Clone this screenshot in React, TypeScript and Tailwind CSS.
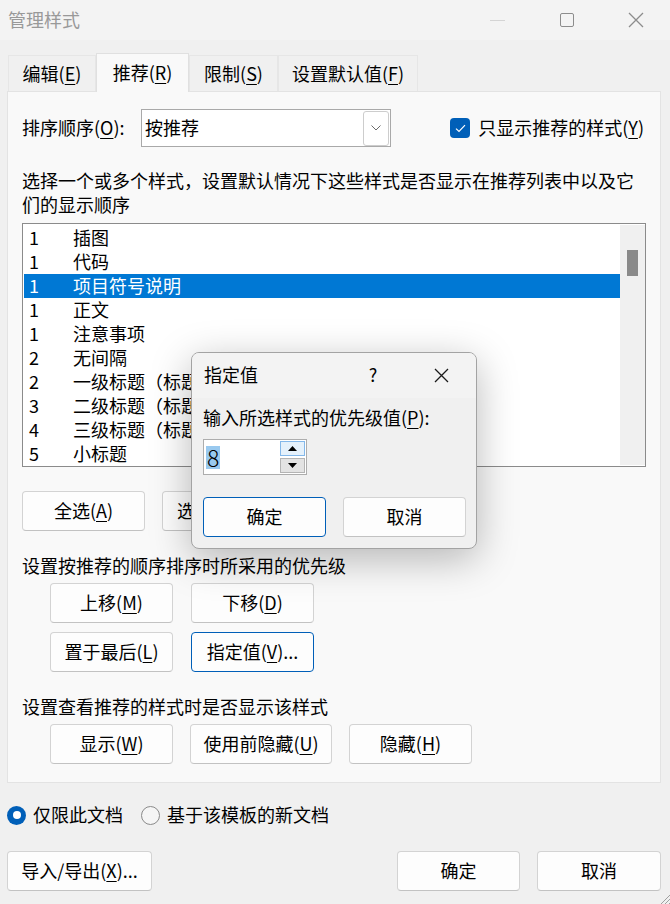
import React from 'react';
import clsx from 'clsx';

const Key = ({ k }: { k: string }) => (
  <span className="underline underline-offset-[3px] decoration-[1px]">{k}</span>
);

const Btn = ({
  children,
  className,
  primary,
}: {
  children: React.ReactNode;
  className?: string;
  primary?: boolean;
}) => (
  <div
    className={clsx(
      'h-[40px] flex items-center justify-center rounded-[4px] border bg-[#fdfdfd] shrink-0 pb-[2px] whitespace-nowrap',
      primary ? 'border-[#005fb8]' : 'border-[#d3d3d3] border-b-[#c2c2c2]',
      className
    )}
  >
    {children}
  </div>
);

// names cut where the modal covers them
const styles: { n: number; name: string }[] = [
  { n: 1, name: '插图' },
  { n: 1, name: '代码' },
  { n: 1, name: '项目符号说明' },
  { n: 1, name: '正文' },
  { n: 1, name: '注意事项' },
  { n: 2, name: '无间隔' },
  { n: 2, name: '一级标题（标题' },
  { n: 3, name: '二级标题（标题' },
  { n: 4, name: '三级标题（标题' },
  { n: 5, name: '小标题' },
];

const tabs = [
  { label: '编辑', k: 'E', w: 'w-[88px]' },
  { label: '推荐', k: 'R', w: 'w-[93px]', active: true },
  { label: '限制', k: 'S', w: 'w-[89px]' },
  { label: '设置默认值', k: 'F', w: 'w-[140px]' },
];

export default function App() {
  return (
    <div className="w-[670px] h-[904px] bg-[#f0f0f0] relative overflow-hidden text-[#000] text-[18px] leading-[24px] font-['Noto_Sans_CJK_SC','Noto_Sans',sans-serif]">
      {/* title bar */}
      <div className="h-[40px] bg-[#f3f3f3] flex items-center">
        <div className="pl-[8px] pb-[3px] flex-1 text-[#999999]">管理样式</div>
        <div className="w-[70px] h-full flex items-center justify-center">
          <div className="w-[15px] h-px bg-[#d4d4d4]" />
        </div>
        <div className="w-[70px] h-full flex items-center justify-center">
          <div className="w-[14px] h-[14px] border-[1.5px] border-[#8c8c8c] rounded-[2px]" />
        </div>
        <div className="w-[68px] h-full flex items-center justify-center">
          <svg width="16" height="16" viewBox="0 0 16 16">
            <path d="M1 1L15 15M15 1L1 15" stroke="#8c8c8c" strokeWidth="1.3" fill="none" />
          </svg>
        </div>
      </div>

      {/* tabs */}
      <div className="mt-[13px] h-[39px] pl-[8px] flex items-end relative z-10">
        {tabs.map((t) => (
          <div
            key={t.k}
            className={clsx(
              'flex items-center justify-center border-t border-l border-r pb-[2px]',
              t.w,
              t.active
                ? 'h-[39px] bg-[#f9f9f9] border-[#e0e0e0]'
                : 'h-[36px] mb-px bg-[#f0f0f0] border-[#e6e6e6]'
            )}
          >
            {t.label}(<Key k={t.k} />)
          </div>
        ))}
      </div>

      {/* panel */}
      <div className="-mt-px ml-[7px] w-[654px] border border-[#e3e3e3] bg-[#f9f9f9] px-[14px] pt-[17px] pb-[18px]">
        <div className="h-[38px] flex items-center">
          <div className="w-[119px] pb-[2px]">
            排序顺序(<Key k="O" />):
          </div>
          <div className="w-[250px] h-[38px] border border-[#a9a9a9] bg-white flex items-center pl-[3px] pr-px">
            <div className="flex-1 pb-[2px]">按推荐</div>
            <div className="w-[26px] h-[35px] border border-[#cdcdcd] rounded-[3px] flex items-center justify-center">
              <svg width="10" height="6" viewBox="0 0 10 6">
                <path d="M0.5 0.5L5 5L9.5 0.5" stroke="#6b6b6b" strokeWidth="1" fill="none" />
              </svg>
            </div>
          </div>
          <div className="ml-auto mr-[2px] flex items-center gap-[8px]">
            <div className="w-[20px] h-[20px] rounded-[4px] bg-[#005fb8] flex items-center justify-center">
              <svg width="11" height="9" viewBox="0 0 11 9">
                <path d="M1 4.6L4 7.5L10 1.2" stroke="#fff" strokeWidth="1.2" fill="none" />
              </svg>
            </div>
            <div className="pb-[2px]">
              只显示推荐的样式(<Key k="Y" />)
            </div>
          </div>
        </div>

        <div className="mt-[21px] pb-[2px]">
          选择一个或多个样式，设置默认情况下这些样式是否显示在推荐列表中以及它
          <br />
          们的显示顺序
        </div>

        <div className="mt-[5px] h-[244px] border border-[#8b8b8b] bg-white flex">
          <div className="flex-1 pt-[2px] pl-px overflow-hidden">
            {styles.map((s, i) => (
              <div
                key={i}
                className={clsx(
                  'h-[24px] flex items-center whitespace-nowrap pb-[2px]',
                  i === 2 && 'bg-[#0078d4] text-white'
                )}
              >
                <span className="w-[49px] pl-[5px]">{s.n}</span>
                <span>{s.name}</span>
              </div>
            ))}
          </div>
          <div className="w-[25px] mt-px mb-px bg-[#f0f0f0] pt-[25px] pl-[7px]">
            <div className="w-[11px] h-[26px] bg-[#8a8a8a]" />
          </div>
        </div>

        <div className="mt-[24px] flex gap-[17px]">
          <Btn className="w-[123px]">
            全选(<Key k="A" />)
          </Btn>
          {/* mostly hidden under the modal */}
          <Btn className="w-[162px] justify-start pl-[14px]">选</Btn>
        </div>

        <div className="mt-[22px] pb-[2px]">设置按推荐的顺序排序时所采用的优先级</div>
        <div className="mt-[4px] ml-[28px] flex flex-col gap-[9px]">
          <div className="flex gap-[18px]">
            <Btn className="w-[123px]">
              上移(<Key k="M" />)
            </Btn>
            <Btn className="w-[123px]">
              下移(<Key k="D" />)
            </Btn>
          </div>
          <div className="flex gap-[18px]">
            <Btn className="w-[123px]">
              置于最后(<Key k="L" />)
            </Btn>
            <Btn className="w-[123px]" primary>
              指定值(<Key k="V" />)...
            </Btn>
          </div>
        </div>

        <div className="mt-[22px] pb-[2px]">设置查看推荐的样式时是否显示该样式</div>
        <div className="mt-[4px] ml-[28px] flex gap-[17px]">
          <Btn className="w-[123px]">
            显示(<Key k="W" />)
          </Btn>
          <Btn className="w-[142px]">
            使用前隐藏(<Key k="U" />)
          </Btn>
          <Btn className="w-[123px]">
            隐藏(<Key k="H" />)
          </Btn>
        </div>
      </div>

      {/* radios */}
      <div className="mt-[20px] h-[24px] pl-[7px] flex items-center">
        <div className="w-[19px] h-[19px] rounded-full bg-[#005fb8] flex items-center justify-center">
          <div className="w-[8px] h-[8px] rounded-full bg-white" />
        </div>
        <span className="ml-[7px] pb-[2px]">仅限此文档</span>
        <div className="ml-[18px] w-[19px] h-[19px] rounded-full border border-[#8a8a8a] bg-[#f5f5f5]" />
        <span className="ml-[7px] pb-[2px]">基于该模板的新文档</span>
      </div>

      {/* bottom buttons */}
      <div className="mt-[24px] pl-[7px] pr-[9px] flex">
        <Btn className="w-[145px]">
          导入/导出(<Key k="X" />)...
        </Btn>
        <div className="ml-auto flex gap-[17px]">
          <Btn className="w-[123px]">确定</Btn>
          <Btn className="w-[124px]">取消</Btn>
        </div>
      </div>

      {/* resize grip */}
      <svg className="absolute right-0 bottom-0" width="11" height="11" viewBox="0 0 11 11">
        <path d="M11 2L2 11M11 6L6 11M11 10L10 11" stroke="#a0a0a0" strokeWidth="1" fill="none" />
      </svg>

      {/* modal dialog */}
      <div className="absolute left-[191px] top-[352px] w-[286px] h-[197px] rounded-[8px] border border-[#a3a3a3] bg-[#f0f0f0] shadow-[0_10px_40px_rgba(0,0,0,0.28)] overflow-hidden">
        <div className="h-[45px] bg-[#f3f3f3] flex items-center">
          <div className="flex-1 pl-[12px] pb-[3px]">指定值</div>
          <div className="w-[46px] mr-[11px] text-center pb-[3px]">?</div>
          <div className="w-[69px] flex items-center justify-center">
            <svg width="15" height="15" viewBox="0 0 15 15">
              <path d="M1 1L14 14M14 1L1 14" stroke="#1a1a1a" strokeWidth="1.3" fill="none" />
            </svg>
          </div>
        </div>
        <div className="px-[11px] pt-[7px]">
          <div className="pb-[2px]">
            输入所选样式的优先级值(<Key k="P" />):
          </div>
          <div className="mt-[8px] w-[104px] h-[36px] border border-[#adadad] bg-white flex items-center pl-[2px] pr-px">
            <span className="bg-[#99c9ef] text-[23px] leading-[23px] px-px font-light">8</span>
            <div className="ml-auto w-[25px] flex flex-col gap-[2px]">
              <div className="h-[15px] bg-[#e5f1fb] border border-[#84b8ea] flex items-center justify-center">
                <svg width="9" height="5" viewBox="0 0 9 5">
                  <path d="M4.5 0L9 5H0Z" fill="#000" />
                </svg>
              </div>
              <div className="h-[15px] bg-[#e3e3e3] border border-[#b4b4b4] flex items-center justify-center">
                <svg width="9" height="5" viewBox="0 0 9 5">
                  <path d="M0 0H9L4.5 5Z" fill="#000" />
                </svg>
              </div>
            </div>
          </div>
          <div className="mt-[22px] flex gap-[17px]">
            <Btn className="w-[123px]" primary>
              确定
            </Btn>
            <Btn className="w-[123px]">取消</Btn>
          </div>
        </div>
      </div>
    </div>
  );
}
